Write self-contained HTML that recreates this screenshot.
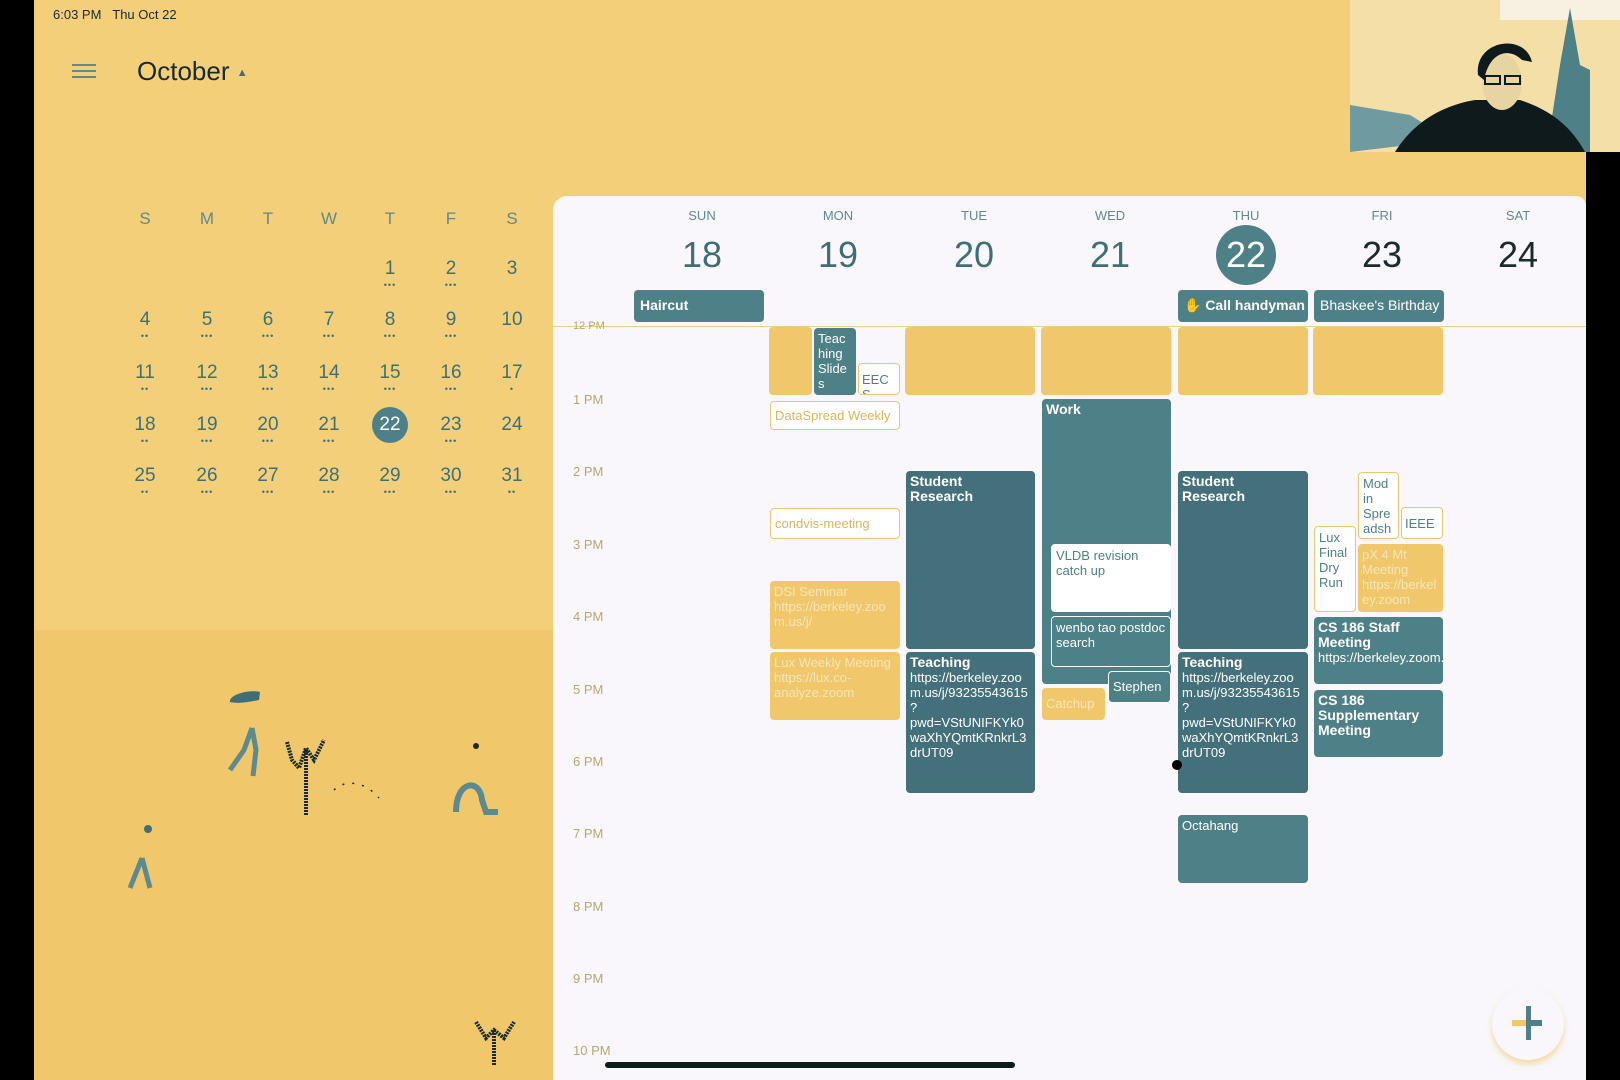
<!DOCTYPE html>
<html><head><meta charset="utf-8"><style>
*{margin:0;padding:0;box-sizing:border-box}
body{width:1620px;height:1080px;overflow:hidden;position:relative;background:#f2cb72;font-family:"Liberation Sans",sans-serif}
.abs{position:absolute}
.top{left:34px;top:0;width:1552px;height:640px;background:#f3cf7a}
.bot{left:34px;top:630px;width:520px;height:450px;background:#f0c76b}
.mc{position:absolute;width:40px;margin-left:-20px;text-align:center;font-size:19px;color:#3f6f76}
.mh{position:absolute;width:40px;margin-left:-20px;text-align:center;font-size:17px;color:#5d8a90}
.dots{position:absolute;width:30px;margin-left:-15px;text-align:center;font-size:9px;letter-spacing:1px;color:#3f6f76;line-height:6px}
.card{left:553px;top:196px;width:1033px;height:884px;background:#f9f7fb;border-top-left-radius:14px;border-top-right-radius:10px}
.dn{position:absolute;width:80px;margin-left:-40px;text-align:center;font-size:13px;color:#5d8a90;top:208px}
.dd{position:absolute;width:80px;margin-left:-40px;text-align:center;font-size:36px;color:#3f6f76;top:234px}
.tl{position:absolute;left:573px;font-size:13px;color:#bba66c}
.ev{position:absolute;border-radius:4px;font-size:13px;line-height:15px;padding:3px 4px;overflow:hidden;white-space:normal;overflow-wrap:anywhere;color:#fff}
.t{background:#4e8087}
.td{background:#43707a}
.y{background:#f0c76b;color:#f8e6b8}
.w{background:#fff;border:1px solid #e9c76d;color:#d8b45c}
b{font-weight:bold;font-size:14px}
</style></head><body>
<div class="abs" style="left:0;top:0;width:34px;height:1080px;background:#000"></div>
<div class="abs top"></div>
<div class="abs bot"></div>
<div class="abs" style="left:1586px;top:152px;width:34px;height:928px;background:#000"></div>

<!-- video -->
<div class="abs" style="left:1350px;top:0;width:270px;height:152px;background:#f6e6b8;overflow:hidden">
<svg width="270" height="152">
<rect width="270" height="152" fill="#f4dfa6"/>
<rect x="150" y="0" width="120" height="20" fill="#f9f7fb" opacity="0.7"/>
<path d="M0 105 L60 115 L100 140 L0 152Z" fill="#6f9aa0"/>
<path d="M200 130 L210 65 L220 8 L230 65 L240 70 L240 152 L200 152Z" fill="#4e8087"/>
<path d="M45 152 C65 120 95 105 125 100 L170 100 C200 110 220 125 235 152Z" fill="#0e1a1c"/>
<ellipse cx="152" cy="82" rx="20" ry="28" fill="#e8d4a0"/>
<path d="M128 75 C124 40 175 32 182 62 L172 60 C160 48 140 50 134 80Z" fill="#0e1a1c"/>
<rect x="135" y="76" width="15" height="8" fill="none" stroke="#0e1a1c" stroke-width="2"/>
<rect x="155" y="76" width="15" height="8" fill="none" stroke="#0e1a1c" stroke-width="2"/>
</svg>
</div>

<!-- status -->
<div class="abs" style="left:53px;top:7px;font-size:13px;color:#1a2a2e">6:03 PM&nbsp;&nbsp;&nbsp;Thu Oct 22</div>
<div class="abs" style="left:72px;top:64px;width:24px;height:2px;background:#5d8a90;box-shadow:0 6px 0 #5d8a90,0 12px 0 #5d8a90"></div>
<div class="abs" style="left:137px;top:56px;font-size:26px;color:#1a2a2e">October <span style="font-size:11px;color:#3f6f76;vertical-align:middle">▲</span></div>

<!-- mini calendar -->
<div class="mh" style="left:145px;top:209px">S</div><div class="mh" style="left:207px;top:209px">M</div><div class="mh" style="left:268px;top:209px">T</div><div class="mh" style="left:329px;top:209px">W</div><div class="mh" style="left:390px;top:209px">T</div><div class="mh" style="left:451px;top:209px">F</div><div class="mh" style="left:512px;top:209px">S</div>
<div class="abs" style="left:372px;top:407px;width:36px;height:36px;border-radius:50%;background:#4e8087"></div>
<div id="mini"></div>
<script>
(function(){var xs=[145,207,268,329,390,451,512],ys=[269,320,373,425,476],h='';var d=1;
for(var r=0;r<5;r++)for(var c=0;c<7;c++){if(r==0&&c<4)continue;if(d>31)break;
var col=(d==22)?'#fff':'#3f6f76';
h+='<div class="mc" style="left:'+xs[c]+'px;top:'+(ys[r]-11)+'px;color:'+col+'">'+d+'</div>';
if(d!=22){var n=(c==0||c==6)?(d==3||d==10||d==24?'':'••'):'•••';if(d==17)n='•';h+='<div class="dots" style="left:'+xs[c]+'px;top:'+(ys[r]+13)+'px">'+n+'</div>';}
d++;}
document.getElementById('mini').innerHTML=h;})();
</script>

<!-- illustrations -->
<svg class="abs" style="left:34px;top:640px" width="520" height="440">
<path d="M196 60 C200 52 220 50 226 52 L225 60 C215 62 205 64 196 62Z" fill="#3f6f76"/>
<path d="M218 88 L210 110 L196 130 M218 88 L222 110 L219 136" stroke="#5d8a90" stroke-width="5" fill="none"/>
<path d="M253 102 L258 120 L265 128 L272 108 L280 120 L290 100 M272 110 L272 175" stroke="#1a2a2e" stroke-width="4" fill="none" stroke-dasharray="2 1"/>
<path d="M300 150 C310 140 330 140 345 158" stroke="#1a2a2e" stroke-width="1.5" stroke-dasharray="2 8" fill="none"/>
<circle cx="442" cy="106" r="3" fill="#1a2a2e"/>
<path d="M422 172 C422 140 446 138 448 160 L452 172 L464 172" stroke="#5d8a90" stroke-width="6" fill="none"/>
<circle cx="114" cy="189" r="4" fill="#3f6f76"/>
<path d="M108 218 L96 248 M108 218 L116 248" stroke="#5d8a90" stroke-width="5" fill="none"/>
<path d="M442 382 L452 398 L460 390 L470 398 L480 382 M460 390 L460 426" stroke="#1a2a2e" stroke-width="4" fill="none" stroke-dasharray="2 1"/>
</svg>

<!-- card -->
<div class="abs card"></div>
<div class="dn" style="left:702px">SUN</div><div class="dn" style="left:838px">MON</div><div class="dn" style="left:974px">TUE</div><div class="dn" style="left:1110px">WED</div><div class="dn" style="left:1246px">THU</div><div class="dn" style="left:1382px">FRI</div><div class="dn" style="left:1518px">SAT</div>
<div class="abs" style="left:1216px;top:225px;width:60px;height:60px;border-radius:50%;background:#4e8087"></div>
<div class="dd" style="left:702px">18</div><div class="dd" style="left:838px">19</div><div class="dd" style="left:974px">20</div><div class="dd" style="left:1110px">21</div><div class="dd" style="left:1246px;color:#fff">22</div><div class="dd" style="left:1382px;color:#1a2a2e">23</div><div class="dd" style="left:1518px;color:#1a2a2e">24</div>

<div class="ev t" style="left:634px;top:290px;width:130px;height:32px;padding:8px 6px"><b>Haircut</b></div>
<div class="ev t" style="left:1178px;top:290px;width:130px;height:32px;padding:8px 6px;white-space:nowrap"><b>&#9995; Call handyman</b></div>
<div class="ev t" style="left:1314px;top:290px;width:130px;height:32px;font-size:14px;padding:8px 6px;white-space:nowrap">Bhaskee's Birthday</div>
<div class="abs" style="left:553px;top:326px;width:1033px;height:1px;background:#ecd08a"></div>

<div class="tl" style="top:320px;font-size:11px">12 PM</div>
<div class="tl" style="top:392px">1 PM</div><div class="tl" style="top:464px">2 PM</div><div class="tl" style="top:537px">3 PM</div><div class="tl" style="top:609px">4 PM</div><div class="tl" style="top:682px">5 PM</div><div class="tl" style="top:754px">6 PM</div><div class="tl" style="top:826px">7 PM</div><div class="tl" style="top:899px">8 PM</div><div class="tl" style="top:971px">9 PM</div><div class="tl" style="top:1043px">10 PM</div>

<!-- Mon -->
<div class="ev y" style="left:769px;top:327px;width:43px;height:68px"></div>
<div class="ev t" style="left:814px;top:328px;width:42px;height:67px">Teaching Slides</div>
<div class="ev w" style="left:858px;top:363px;width:42px;height:32px;padding:8px 3px;color:#4e8087">EECS</div>
<div class="ev w" style="left:770px;top:401px;width:130px;height:29px;padding:6px 4px;white-space:nowrap">DataSpread Weekly</div>
<div class="ev w" style="left:770px;top:508px;width:130px;height:31px;padding:7px 4px;white-space:nowrap">condvis-meeting</div>
<div class="ev y" style="left:770px;top:581px;width:130px;height:68px">DSI Seminar https://berkeley.zoom.us/j/</div>
<div class="ev y" style="left:770px;top:652px;width:130px;height:68px">Lux Weekly Meeting https://lux.co-analyze.zoom</div>

<!-- Tue -->
<div class="ev y" style="left:905px;top:327px;width:130px;height:68px"></div>
<div class="ev td" style="left:906px;top:471px;width:129px;height:178px"><b>Student<br>Research</b></div>
<div class="ev td" style="left:906px;top:652px;width:129px;height:141px"><b>Teaching</b><br>https://berkeley.zoom.us/j/93235543615?pwd=VStUNIFKYk0waXhYQmtKRnkrL3drUT09</div>

<!-- Wed -->
<div class="ev y" style="left:1041px;top:327px;width:130px;height:68px"></div>
<div class="ev t" style="left:1042px;top:399px;width:129px;height:285px"><b>Work</b></div>
<div class="ev w" style="left:1051px;top:544px;width:120px;height:68px;color:#4e8087;border-color:#fff">VLDB revision catch up</div>
<div class="ev t" style="left:1051px;top:616px;width:120px;height:51px;border:1px solid #fff">wenbo tao postdoc search</div>
<div class="ev t" style="left:1108px;top:671px;width:63px;height:32px;padding:7px 4px;white-space:nowrap;border:1px solid #fff">Stephen</div>
<div class="ev y" style="left:1042px;top:688px;width:63px;height:32px;padding:8px 4px;white-space:nowrap">Catchup</div>

<!-- Thu -->
<div class="ev y" style="left:1178px;top:327px;width:130px;height:68px"></div>
<div class="ev td" style="left:1178px;top:471px;width:130px;height:178px"><b>Student<br>Research</b></div>
<div class="ev td" style="left:1178px;top:652px;width:130px;height:141px"><b>Teaching</b><br>https://berkeley.zoom.us/j/93235543615?pwd=VStUNIFKYk0waXhYQmtKRnkrL3drUT09</div>
<div class="ev t" style="left:1178px;top:815px;width:130px;height:68px">Octahang</div>
<div class="abs" style="left:1172px;top:760px;width:10px;height:10px;border-radius:50%;background:#000"></div>

<!-- Fri -->
<div class="ev y" style="left:1313px;top:327px;width:130px;height:68px"></div>
<div class="ev w" style="left:1358px;top:472px;width:41px;height:67px;color:#4e8087">Mod in Spreadsheets</div>
<div class="ev w" style="left:1401px;top:507px;width:42px;height:32px;padding:8px 3px;color:#4e8087">IEEE</div>
<div class="ev w" style="left:1314px;top:526px;width:42px;height:86px;color:#4e8087">Lux Final Dry Run</div>
<div class="ev y" style="left:1358px;top:544px;width:85px;height:68px">pX 4 Mt Meeting https://berkeley.zoom</div>
<div class="ev t" style="left:1314px;top:617px;width:129px;height:67px;overflow-wrap:normal"><b>CS 186 Staff Meeting</b><br>https://berkeley.zoom.us</div>
<div class="ev t" style="left:1314px;top:690px;width:129px;height:67px;overflow-wrap:normal"><b>CS 186 Supplementary Meeting</b></div>

<!-- FAB -->
<div class="abs" style="left:1492px;top:988px;width:72px;height:72px;border-radius:50%;box-shadow:0 4px 6px rgba(240,199,107,0.6)"></div>
<div class="abs" style="left:1512px;top:1020px;width:30px;height:6px;background:#f0c76b"></div>
<div class="abs" style="left:1526px;top:1006px;width:5px;height:34px;background:#4e8087"></div>
<div class="abs" style="left:1531px;top:1020px;width:11px;height:6px;background:#4e8087"></div>

<div class="abs" style="left:605px;top:1062px;width:410px;height:6px;border-radius:3px;background:#0e1a1c"></div>
</body></html>
